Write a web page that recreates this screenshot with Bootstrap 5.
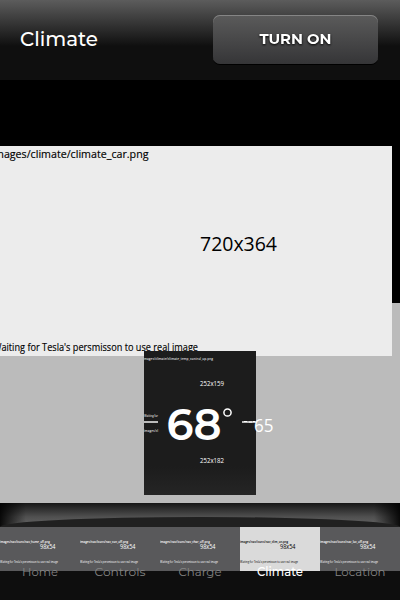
<!DOCTYPE html>
<html lang="en">
<head>
<meta charset="utf-8">
<meta name="viewport" content="width=device-width, initial-scale=1">
<title>Climate</title>
<link href="https://cdn.jsdelivr.net/npm/bootstrap@5.3.0/dist/css/bootstrap.min.css" rel="stylesheet">
<style>
body{font-family:Montserrat,Inter,sans-serif;background:#000;height:600px}
svg{display:block}
svg text{font-family:"Open Sans","Noto Sans",sans-serif}
svg .ui{font-family:Montserrat,Inter,sans-serif}
.topbar{height:80px;padding:0 22px 0 20px;background:linear-gradient(#5c5c5c 0,#111 45px,#0f0f0f 46px)}
.topbar h1{font-size:21px;font-weight:500;margin:0 0 4px;width:80px}
.power{width:165px;height:49px;margin-top:-1px;border-radius:7px;background:linear-gradient(#5b5b5b,#353537);box-shadow:inset 0 1px #858585,0 1px #000;border:0;padding:0 0 2px}
.power svg{filter:drop-shadow(0 1px 1px #000)}
.stage{height:423px;background:linear-gradient(#000 223px,#bbb 223px)}
.car{top:66px;left:0}
.temp{top:271px;left:144px}
.shelf{height:24px}
.tabs{height:73px;background:#0e0e0e}
.tab-item{width:80px;color:#858585}
.tab-art{height:44px;background:#59595b;color:#fff}
.tab-item.on .tab-art{background:#dadada;color:#000}
.tab-item.on{color:#fff}
.tab-label{margin-top:-9px}
</style>
</head>
<body class="overflow-hidden">
<div class="d-flex flex-column h-100">
<header class="topbar d-flex align-items-center justify-content-between text-white flex-shrink-0">
 <h1><svg width="80" height="28" fill="#fff"><text class="ui" x="0" y="22" font-size="20.5" font-weight="500" textLength="78" lengthAdjust="spacingAndGlyphs">Climate</text></svg></h1>
 <button class="power btn d-flex align-items-center justify-content-center"><svg width="74" height="22" fill="#fff"><text class="ui" x="0.500" y="16" font-size="14.5" font-weight="700" textLength="72" lengthAdjust="spacingAndGlyphs">TURN ON</text></svg></button>
</header>
<main class="stage position-relative flex-shrink-0">
 <svg class="car position-absolute" width="392" height="210">
  <rect width="392" height="210" fill="#ececec"/>
  <text x="-6" y="11.500" font-size="11" stroke="#000" stroke-width=".15" textLength="154.5" lengthAdjust="spacingAndGlyphs">mages/climate/climate_car.png</text>
  <text x="200" y="105" font-size="19.5" textLength="77" lengthAdjust="spacingAndGlyphs">720x364</text>
  <text x="-7" y="204.500" font-size="10.800" stroke="#000" stroke-width=".15" textLength="205" lengthAdjust="spacingAndGlyphs">Waiting for Tesla's persmisson to use real image</text>
 </svg>
 <svg class="temp position-absolute" width="140" height="144" fill="#fff">
  <defs><linearGradient id="foot" x1="0" y1="0" x2="0" y2="1"><stop offset=".8" stop-color="#1c1c1c"/><stop offset="1" stop-color="#252525"/></linearGradient></defs>
  <rect width="112" height="144" fill="url(#foot)"/>
  <text x="-1" y="9" font-size="3.8" font-weight="600" fill="#ddd" textLength="70" lengthAdjust="spacingAndGlyphs">images/climate/climate_temp_control_up.png</text>
  <text x="56" y="35" font-size="6.300" textLength="24" lengthAdjust="spacingAndGlyphs">252x159</text>
  <text x="56" y="112" font-size="6.300" textLength="24" lengthAdjust="spacingAndGlyphs">252x182</text>
  <text x="0" y="66" font-size="3.300" font-weight="600" fill="#ddd" textLength="14" lengthAdjust="spacingAndGlyphs">Waiting for</text>
  <text x="0" y="81" font-size="3.300" font-weight="600" fill="#ddd" textLength="14" lengthAdjust="spacingAndGlyphs">images/cl</text>
  <path d="M0 70h14v2H0z" fill="#bbb"/><path d="M98 70h14v2H98z" fill="#bbb"/><path d="M100 70.500h3M105 71h3M109 70.500h2" stroke="#fff"/>
  <text class="ui" x="22.500" y="89" font-size="45" font-weight="600" textLength="55" lengthAdjust="spacingAndGlyphs">68</text>
  <circle cx="83.500" cy="61.500" r="3.600" fill="none" stroke="#fff" stroke-width="1.500"/>
  <text x="110" y="81" font-size="18" textLength="19.500" lengthAdjust="spacingAndGlyphs">65</text>
 </svg>
</main>
<svg class="shelf flex-shrink-0" width="400" height="24">
 <defs><linearGradient id="gl" x1="0" y1="0" x2="0" y2="1"><stop stop-color="#161616"/><stop offset=".58" stop-color="#505050"/><stop offset="1" stop-color="#666"/></linearGradient>
 <linearGradient id="edge"><stop stop-color="#000" stop-opacity=".9"/><stop offset=".065" stop-color="#000" stop-opacity="0"/><stop offset=".935" stop-color="#000" stop-opacity="0"/><stop offset="1" stop-color="#000" stop-opacity=".9"/></linearGradient></defs>
 <rect width="400" height="24" fill="url(#gl)"/><rect width="400" height="24" fill="url(#edge)"/>
 <path d="M0 24A200 10 0 0 1 400 24z" fill="#202020"/>
</svg>
<nav class="tabs d-flex flex-shrink-0" id="tabs"></nav>
</div>
<script>
const tabs=[["Home","home_off",36],["Controls","con_off",51],["Charge","char_off",43],["Climate","clim_on",46],["Location","loc_off",51]];
document.getElementById("tabs").innerHTML=tabs.map(([name,file,w])=>`
<a class="tab-item d-flex flex-column text-decoration-none ${name==="Climate"?"on":""}" href="#">
<svg class="tab-art" width="80" height="44" fill="currentColor">
<text x="0" y="16" font-size="3.700" font-weight="600" textLength="${file.length*1.6+37}" lengthAdjust="spacingAndGlyphs">images/nav/icons/nav_${file}.png</text>
<text x="40" y="22.300" font-size="6.300" textLength="15.500" lengthAdjust="spacingAndGlyphs">98x54</text>
<text x="0" y="36" font-size="3.300" textLength="58" lengthAdjust="spacingAndGlyphs">Waiting for Tesla's persmisson to use real image</text></svg>
<svg class="tab-label" width="80" height="20" fill="currentColor"><text class="ui" x="${40-w/2}" y="14" font-size="12" font-weight="${name==="Climate"?500:400}" textLength="${w}" lengthAdjust="spacingAndGlyphs">${name}</text></svg></a>`).join("");
</script>
<script src="https://cdn.jsdelivr.net/npm/bootstrap@5.3.0/dist/js/bootstrap.bundle.min.js"></script>
</body>
</html>
